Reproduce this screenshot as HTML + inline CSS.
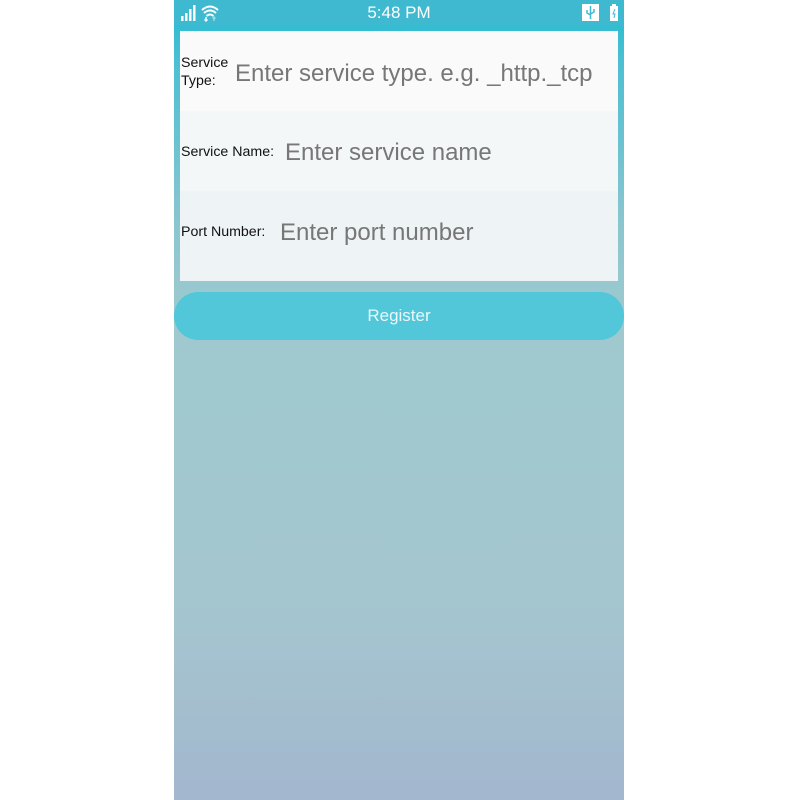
<!DOCTYPE html>
<html><head><meta charset="utf-8"><style>
html,body{margin:0;padding:0;width:800px;height:800px;background:#fff;overflow:hidden;font-family:"Liberation Sans",sans-serif}
#ph{position:absolute;left:174px;top:0;width:450px;height:800px;
background:linear-gradient(#1fbbd1 0px,#4cbfd2 60px,#8cc6cf 230px,#9fc9cf 320px,#a4c6cf 600px,#a3b7ce 800px)}
#sb{position:absolute;left:0;top:0;width:450px;height:25px;background:#3fb9d0;color:#fff}
#time{position:absolute;left:0;width:450px;text-align:center;top:3px;font-size:17px}
#panel{position:absolute;left:6px;top:31px;width:438px;height:250px}
.row{position:absolute;left:0;width:438px}
.lab{position:absolute;left:1px;font-size:14.2px;color:#111;line-height:18px}
.ph{position:absolute;font-size:24px;color:#777;white-space:nowrap}
#btn{position:absolute;left:0;top:292px;width:450px;height:48px;border-radius:24px;background:#52c7d9;color:#e8f8fb;font-size:17px;text-align:center;line-height:47px}
</style></head><body>
<div id="ph">
<div id="sb">
<svg style="position:absolute;left:7px;top:4px" width="40" height="18">
<rect x="0" y="12" width="2.5" height="5" fill="#fff"/><rect x="4" y="9" width="2.5" height="8" fill="#fff"/><rect x="8" y="5" width="2.5" height="12" fill="#fff"/><rect x="12" y="1" width="2.5" height="16" fill="#fff"/>
<path d="M21 6 Q29 -1 37 6 M23 9 Q29 4 35 9 M25.5 12 Q29 9 32.5 12" stroke="#fff" stroke-width="2" fill="none"/>
<path d="M25 13 v4 M23.5 15.5 l1.5 1.5 1.5-1.5" stroke="#fff" stroke-width="1.4" fill="none"/>
<path d="M33 17 v-4 M31.5 14.5 l1.5-1.5 1.5 1.5" stroke="#9fdbe6" stroke-width="1.4" fill="none"/>
</svg>
<div id="time">5:48 PM</div>
<svg style="position:absolute;left:408px;top:4px" width="40" height="18">
<rect x="0" y="0" width="17" height="17" fill="#fff"/>
<path d="M8.5 2 v13 M5 6 v3 l3.5 2 M12 5 v3 l-3.5 2" stroke="#3fb9d0" stroke-width="1.5" fill="none"/>
<rect x="28" y="2" width="8" height="15" fill="#fff"/><rect x="30" y="0" width="4" height="2" fill="#fff"/>
<path d="M33 5 l-2 5 h2 l-1 4" stroke="#3fb9d0" stroke-width="1" fill="none"/>
</svg>
</div>
<div id="panel">
<div class="row" style="top:0;height:80px;background:#fafafa">
<div class="lab" style="top:23px">Service<br>Type:</div>
<div class="ph" style="left:55px;top:29px">Enter service type. e.g. _http._tcp</div>
</div>
<div class="row" style="top:80px;height:80px;background:#f3f7f8">
<div class="lab" style="top:32px">Service Name:</div>
<div class="ph" style="left:105px;top:28px">Enter service name</div>
</div>
<div class="row" style="top:160px;height:90px;background:#eef3f5">
<div class="lab" style="top:32px">Port Number:</div>
<div class="ph" style="left:100px;top:28px">Enter port number</div>
</div>
</div>
<div id="btn">Register</div>
</div>
</body></html>
